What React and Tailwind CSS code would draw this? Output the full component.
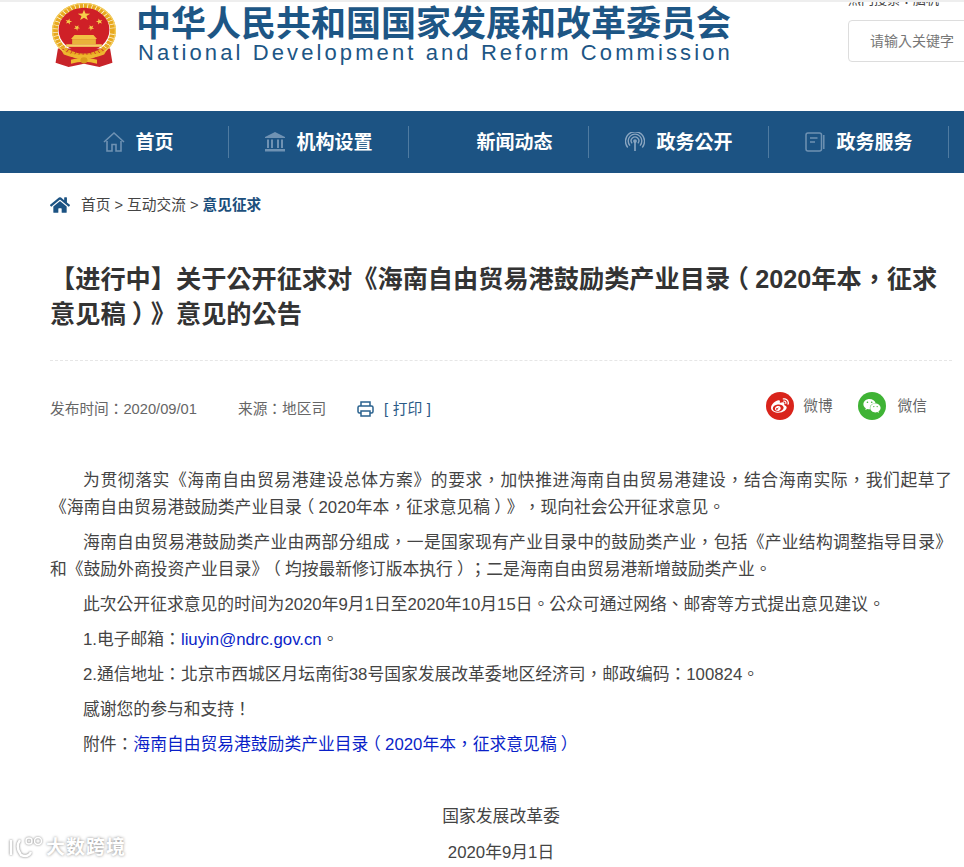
import React from "react";
import { FaWeibo, FaWeixin, FaHome } from "react-icons/fa";

const FONT = '"Liberation Sans","Noto Sans CJK TC",sans-serif';

function Emblem() {
  const star = (cx, cy, r, rot = 0) => {
    const pts = [];
    for (let i = 0; i < 10; i++) {
      const a = ((-90 + rot + i * 36) * Math.PI) / 180;
      const rr = i % 2 ? r * 0.4 : r;
      pts.push(`${(cx + rr * Math.cos(a)).toFixed(2)},${(cy + rr * Math.sin(a)).toFixed(2)}`);
    }
    return <polygon points={pts.join(" ")} fill="#f6cf4a" />;
  };
  return (
    <svg width="64" height="65" viewBox="6 0 54 63" preserveAspectRatio="none" className="shrink-0">
      <path d="M11 44 L9 58 L20 62 L33 59 L46 62 L57 58 L55 44 Z" fill="#c8242a" />
      <circle cx="33" cy="27" r="24.5" fill="none" stroke="#e8a91f" strokeWidth="5" strokeDasharray="3 0.6" />
      <circle cx="33" cy="27" r="26.5" fill="none" stroke="#f4cf62" strokeWidth="1" />
      <circle cx="33" cy="26" r="21.5" fill="#cf2027" />
      {star(33, 12, 5.5)}
      {star(20, 18, 3, 15)}
      {star(46, 18, 3, -15)}
      {star(27, 24, 2.8, 30)}
      {star(39, 24, 2.8, -30)}
      <path d="M22 35 L25 31 H41 L44 35 Z" fill="#f2c043" />
      <rect x="23" y="35" width="20" height="5" fill="#e9b23a" />
      <rect x="18" y="40" width="30" height="2.5" fill="#f4cf62" />
      <path d="M14 46 Q33 55 52 46 L50 50 Q33 58 16 50 Z" fill="#eeb62e" />
      <path d="M22 55 Q33 51 44 55 L44 59 Q33 55 22 59 Z" fill="#efb92f" />
      <circle cx="33" cy="55.5" r="3" fill="#d99a1c" />
    </svg>
  );
}

const NavHome = () => (
  <svg width="22" height="22" viewBox="0 0 22 22" fill="none" stroke="#6f92b3" strokeWidth="1.6">
    <path d="M1 11 L11 2 L21 11" />
    <path d="M4 10 V20 H9 V13.5 H13 V20 H18 V10" />
  </svg>
);
const NavBank = () => (
  <svg width="22" height="20" viewBox="0 0 22 20" fill="#6f92b3">
    <path d="M11 0 L21 5 V6 H1 V5 Z" />
    <rect x="3" y="7.5" width="2" height="8.5" />
    <rect x="7" y="7.5" width="2" height="8.5" />
    <rect x="13" y="7.5" width="2" height="8.5" />
    <rect x="17" y="7.5" width="2" height="8.5" />
    <rect x="1" y="17" width="20" height="2.5" />
  </svg>
);
const NavSignal = () => (
  <svg width="20" height="20" viewBox="0 0 22 22" fill="none" stroke="#8aa6c1" strokeWidth="1.5">
    <path d="M5.5 15 A7.5 7.5 0 1 1 16.5 15" />
    <path d="M3 17 A10.5 10.5 0 1 1 19 17" />
    <path d="M7.8 12.5 A4.2 4.2 0 1 1 14.2 12.5" />
    <circle cx="11" cy="10" r="1.3" fill="#8aa6c1" />
    <path d="M11 11 V21" strokeWidth="1.8" />
  </svg>
);
const NavBook = () => (
  <svg width="20" height="20" viewBox="0 0 20 20" fill="none" stroke="#6f92b3" strokeWidth="1.5">
    <rect x="1" y="1" width="15.5" height="18" rx="2" />
    <path d="M5 6 H12.5 M5 10 H10" />
    <path d="M18.8 3 V17" />
  </svg>
);

const items = [
  ["首页", <NavHome />],
  ["机构设置", <NavBank />],
  ["新闻动态", null],
  ["政务公开", <NavSignal />],
  ["政务服务", <NavBook />],
];

const Para = ({ children }) => (
  <p className="mb-[8.2px] indent-[33px] text-justify leading-[26.88px]">{children}</p>
);
const LP = () => <span className="px-[0.25em] [font-feature-settings:'halt']">（</span>;
const RP = () => <span className="px-[0.25em] [font-feature-settings:'halt']">）</span>;

export default function App() {
  return (
    <div
      className="relative h-[867px] w-[964px] overflow-hidden bg-white [text-spacing-trim:space-all]"
      style={{ fontFamily: FONT }}
    >
      <header className="relative h-[111px] overflow-hidden border-t-2 border-[#eeeeee]">
        <div className="flex items-start pl-[52px] pt-px">
          <Emblem />
          <div className="ml-[20px] pt-[4px]">
            <div className="whitespace-nowrap text-[35px] font-bold leading-[34px] text-[#1d5685]">
              中华人民共和国国家发展和改革委员会
            </div>
            <div className="ml-[2px] whitespace-nowrap text-[22px] leading-[24px] tracking-[3.1px] text-[#1d5685]">
              National Development and Reform Commission
            </div>
          </div>
        </div>
        <div className="absolute left-[848px] top-[-11px] whitespace-nowrap text-[13px] leading-[18px] text-[#444]">
          热门搜索：脑机
        </div>
        <div className="absolute left-[848px] top-[18px] flex h-[42px] w-[140px] items-center rounded border border-[#dddddd] pl-[21px] text-[14px] text-[#777]">
          请输入关键字
        </div>
      </header>

      <nav className="flex h-[62px] items-center bg-[#1c5383] pl-[49px]">
        {items.map(([t, icon]) => (
          <div
            key={t}
            className="flex h-[32px] w-[180px] shrink-0 items-center justify-center border-r border-[#4f7ba1]"
          >
            <span className="flex w-[22px] items-center justify-center">{icon}</span>
            <span className="ml-[10px] text-[19px] font-bold leading-none text-white">{t}</span>
          </div>
        ))}
      </nav>

      <main className="pl-[50px] pr-[12px] text-[#444]">
        <div className="mt-[22px] flex h-[20px] items-center text-[14.7px] text-[#444]">
          <FaHome className="mr-[11px] text-[20px] text-[#1c5383]" />
          <span>首页 &gt; 互动交流 &gt;</span>
          <b className="ml-[4px] text-[#1c4f7c]">意见征求</b>
        </div>

        <h1 className="mt-[47px] text-[25.2px] font-bold leading-[35px] text-[#333]">
          【进行中】关于公开征求对《海南自由贸易港鼓励类产业目录<LP />2020年本，征求意见稿<RP />》意见的公告
        </h1>

        <div className="mt-[28px] border-t border-dashed border-[#e6e6e6]" />

        <div className="mt-[26px] flex h-[38px] items-center justify-between text-[14.7px] text-[#666]">
          <div className="mt-[6px] flex items-center">
            <span>发布时间：2020/09/01</span>
            <span className="ml-[41px]">来源：地区司</span>
            <svg width="17" height="16" viewBox="0 0 17 16" fill="none" stroke="#2a628f" strokeWidth="1.5" className="ml-[31px]">
              <path d="M4 5 V1 H13 V5" />
              <rect x="1" y="5" width="15" height="7" rx="1.5" />
              <rect x="4" y="10" width="9" height="5" fill="#fff" />
            </svg>
            <span className="ml-[10px] tracking-[0.2px] text-[#2a5a86]">[ 打印 ]</span>
          </div>
          <div className="flex items-center pr-[25px] text-[14.7px]">
            <span className="flex h-[28px] w-[28px] items-center justify-center rounded-full bg-[#d9241b]">
              <FaWeibo className="text-[18px] text-white" />
            </span>
            <span className="ml-[9px]">微博</span>
            <span className="ml-[25px] flex h-[28px] w-[28px] items-center justify-center rounded-full bg-[#3fb335]">
              <FaWeixin className="text-[18px] text-white" />
            </span>
            <span className="ml-[12px]">微信</span>
          </div>
        </div>

        <article className="mt-[43px] text-[16.8px]">
          <Para>
            为贯彻落实《海南自由贸易港建设总体方案》的要求，加快推进海南自由贸易港建设，结合海南实际，我们起草了《海南自由贸易港鼓励类产业目录<LP />2020年本，征求意见稿<RP />》，现向社会公开征求意见。
          </Para>
          <Para>
            海南自由贸易港鼓励类产业由两部分组成，一是国家现有产业目录中的鼓励类产业，包括《产业结构调整指导目录》和《鼓励外商投资产业目录》<LP />均按最新修订版本执行<RP />；二是海南自由贸易港新增鼓励类产业。
          </Para>
          <Para>此次公开征求意见的时间为2020年9月1日至2020年10月15日。公众可通过网络、邮寄等方式提出意见建议。</Para>
          <Para>
            1.电子邮箱：<span className="text-[#0a1fc8]">liuyin@ndrc.gov.cn</span>。
          </Para>
          <Para>2.通信地址：北京市西城区月坛南街38号国家发展改革委地区经济司，邮政编码：100824。</Para>
          <Para>感谢您的参与和支持！</Para>
          <Para>
            附件：<span className="text-[#0a1fc8]">海南自由贸易港鼓励类产业目录<LP />2020年本，征求意见稿<RP /></span>
          </Para>
          <div className="mt-[44px] text-center leading-[27px]">国家发展改革委</div>
          <div className="mt-[9px] text-center leading-[27px]">2020年9月1日</div>
        </article>
      </main>

      <div
        className="absolute bottom-[5px] left-[8px] flex items-center text-[19px] font-bold text-white"
        style={{ textShadow: "0 0 3px #888" }}
      >
        <svg width="36" height="22" viewBox="0 0 36 22" fill="none" stroke="#fff" strokeWidth="2.5" className="drop-shadow-[0_0_1px_#777]">
          <path d="M3 3 V18" />
          <path d="M12 3 Q7 10 13 18 Q20 21 23 15" />
          <circle cx="21" cy="4" r="3" strokeWidth="1.5" />
          <circle cx="30" cy="4" r="3.5" strokeWidth="1.5" />
        </svg>
        <span className="ml-[2px] tracking-[1px]">大数跨境</span>
      </div>
    </div>
  );
}
